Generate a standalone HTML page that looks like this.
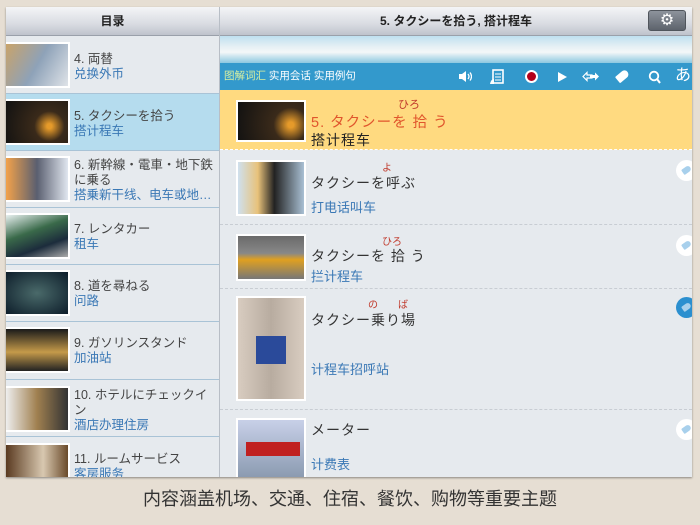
<!DOCTYPE html>
<html><head><meta charset="utf-8"><style>
*{margin:0;padding:0;box-sizing:border-box}
body{width:700px;height:525px;overflow:hidden;background:#e6ded3;font-family:"Liberation Sans","Noto Sans CJK JP",sans-serif;position:relative}
.abs{position:absolute}
#frame{left:6px;top:7px;width:686px;height:470px;background:#e6eaee;overflow:hidden;box-shadow:0 1px 2px rgba(0,0,0,.4)}
.hdr{top:0;height:29px;background:linear-gradient(#f4f5f7,#d9dce2 60%,#bfc3cc);border-bottom:1px solid #9aa0aa;font-size:12px;font-weight:bold;color:#222;text-align:center;line-height:28px}
.row{left:0;width:213px;border-bottom:1px solid #a9c3d6;background:#e6eaee}
.row .th{position:absolute;left:0;width:64px;height:46px;border:2px solid #fff;border-left:0}
.row .t{position:absolute;left:68px;font-size:12.5px;color:#444;line-height:15px;width:142px}
.row .c{color:#3a78b5}
.r2{left:214px;width:472px;border-bottom:1px dashed #c8cdd3}
.r2 .th{position:absolute;left:16px;border:2px solid #fff}
.jp{position:absolute;left:91px;font-size:14px;color:#333;letter-spacing:1px}
.cn{position:absolute;left:91px;font-size:13px;color:#3a78b5}
.rb{position:absolute;font-size:10px;color:#c0392b}
.tag{position:absolute;left:456px;width:21px;height:21px;border-radius:50%;background:#fff}
.tag:after{content:"";position:absolute;left:6px;top:7px;width:9px;height:6px;background:#a8d0ec;border-radius:1px 3px 3px 1px;transform:rotate(-35deg)}
</style></head><body>
<div id="frame" class="abs">
 <div class="abs hdr" style="left:0;width:213px">目录</div>
 <div class="abs" style="left:213px;top:0;width:1px;height:470px;background:#b8bec6"></div>
 <div class="abs hdr" style="left:214px;width:472px">5. タクシーを拾う, 搭计程车</div>
 <div class="abs" style="left:642px;top:3px;width:38px;height:21px;border-radius:3px;background:linear-gradient(#8d939c,#5d636c);border:1px solid #50555c;color:#fff;font-size:16px;text-align:center;line-height:19px">⚙</div>

 <div class="abs row" style="top:29px;height:58px"><div class="th" style="top:6px;background:linear-gradient(120deg,#c9a36a,#8ea2b8,#dfe3e8)"></div><div class="t" style="top:16px">4. 両替<br><span class="c">兑换外币</span></div></div>
 <div class="abs row" style="top:87px;height:57px;background:#b5dcee"><div class="th" style="top:5px;background:radial-gradient(circle at 70% 60%,#e59a2a 5%,#3a2a1a 30%,#111)"></div><div class="t" style="top:15px">5. タクシーを拾う<br><span class="c">搭计程车</span></div></div>
 <div class="abs row" style="top:144px;height:57px"><div class="th" style="top:5px;background:linear-gradient(90deg,#f3a24a,#5a5f70 50%,#e0e6ef)"></div><div class="t" style="top:7px">6. 新幹線・電車・地下鉄に乗る<br><span class="c">搭乗新干线、电车或地…</span></div></div>
 <div class="abs row" style="top:201px;height:57px"><div class="th" style="top:5px;background:linear-gradient(160deg,#e8f0f0,#3a6a4a 40%,#1c2c3c 70%,#aaa)"></div><div class="t" style="top:14px">7. レンタカー<br><span class="c">租车</span></div></div>
 <div class="abs row" style="top:258px;height:57px"><div class="th" style="top:5px;background:radial-gradient(#4a6a6a,#0d1d2a)"></div><div class="t" style="top:14px">8. 道を尋ねる<br><span class="c">问路</span></div></div>
 <div class="abs row" style="top:315px;height:58px"><div class="th" style="top:5px;background:linear-gradient(#1a1a1a,#c59a4a 55%,#222)"></div><div class="t" style="top:14px">9. ガソリンスタンド<br><span class="c">加油站</span></div></div>
 <div class="abs row" style="top:373px;height:57px"><div class="th" style="top:6px;background:linear-gradient(90deg,#eee,#a08050 50%,#333)"></div><div class="t" style="top:8px">10. ホテルにチェックイン<br><span class="c">酒店办理住房</span></div></div>
 <div class="abs row" style="top:430px;height:45px"><div class="th" style="top:6px;background:linear-gradient(90deg,#5a3a20,#d8c8b0 60%,#6a4a2a)"></div><div class="t" style="top:15px">11. ルームサービス<br><span class="c">客房服务</span></div></div>

 <div class="abs" style="left:214px;top:29px;width:472px;height:27px;background:linear-gradient(#bfe0f0,#e6f0f4 40%,#f4f7f8 60%,#8cc8e0)"></div>
 <div class="abs" style="left:214px;top:56px;width:472px;height:27px;background:#3399cc;font-size:10.5px;color:#fff;line-height:27px;padding-left:4px"><span style="color:#d9f0a0">图解词汇</span> 实用会话 实用例句
  <svg class="abs" style="left:238px;top:7px" width="14" height="13" viewBox="0 0 14 13"><path d="M1 4h3l4-3v11l-4-3H1z" fill="#fff"/><path d="M10 4q2 2.5 0 5M12 2.5q3 4 0 8" stroke="#fff" stroke-width="1.3" fill="none"/></svg>
  <svg class="abs" style="left:270px;top:6px" width="14" height="16" viewBox="0 0 14 16"><rect x="3" y="1" width="10" height="13" fill="none" stroke="#fff" stroke-width="1.6"/><path d="M5 5h6M5 8h6M5 11h6" stroke="#fff"/><path d="M0 15q1-5 4-5v5z" fill="#fff"/></svg>
  <span class="abs" style="left:305px;top:7px;width:13px;height:13px;border-radius:50%;background:#b3001a;border:2px solid #fff"></span>
  <span class="abs" style="left:338px;top:9px;width:0;height:0;border-left:9px solid #fff;border-top:5px solid transparent;border-bottom:5px solid transparent"></span>
  <svg class="abs" style="left:362px;top:8px" width="18" height="11" viewBox="0 0 18 11"><path d="M1 5.5l4-4v2.5h5v3H5v2.5z" fill="none" stroke="#fff" stroke-width="1.2"/><path d="M17 5.5l-4-4v2.5H8v3h5v2.5z" fill="#fff"/></svg>
  <span class="abs" style="left:396px;top:9px;width:13px;height:8px;background:#fff;border-radius:1px 4px 4px 1px;transform:rotate(-40deg)"></span>
  <svg class="abs" style="left:428px;top:7px" width="13" height="14" viewBox="0 0 13 14"><circle cx="6" cy="6" r="4.3" fill="none" stroke="#fff" stroke-width="1.8"/><path d="M9 9l3 4" stroke="#fff" stroke-width="2"/></svg>
  <span class="abs" style="left:455px;top:-1px;font-size:16px">あ</span>
 </div>

 <div class="abs r2" style="top:83px;height:60px;background:#ffda80;border-bottom:1px dashed #fff">
  <div class="th" style="top:10px;width:70px;height:42px;background:radial-gradient(circle at 80% 60%,#e59a2a 5%,#3a2a1a 30%,#111)"></div>
  <div class="rb" style="left:178px;top:6px;font-size:11px">ひろ</div>
  <div class="jp" style="top:21px;color:#e0552c;font-size:14.5px">5. タクシーを 拾 う</div>
  <div class="jp" style="top:40px;color:#222">搭计程车</div>
 </div>
 <div class="abs r2" style="top:143px;height:75px">
  <div class="th" style="top:10px;width:70px;height:56px;background:linear-gradient(90deg,#cfe0ee,#e8c27a 30%,#222 55%,#a9c0d4)"></div>
  <div class="rb" style="left:162px;top:9px">よ</div>
  <div class="jp" style="top:23px">タクシーを呼ぶ</div>
  <div class="cn" style="top:47px">打电话叫车</div>
  <div class="tag" style="top:10px"></div>
 </div>
 <div class="abs r2" style="top:218px;height:64px">
  <div class="th" style="top:9px;width:70px;height:47px;background:linear-gradient(#6a6a6a,#888 40%,#e0a020 55%,#777)"></div>
  <div class="rb" style="left:162px;top:8px">ひろ</div>
  <div class="jp" style="top:21px">タクシーを 拾 う</div>
  <div class="cn" style="top:41px">拦计程车</div>
  <div class="tag" style="top:10px"></div>
 </div>
 <div class="abs r2" style="top:282px;height:121px">
  <div class="th" style="top:7px;width:70px;height:105px;background:linear-gradient(90deg,#d8ccc0,#b8aca0,#d8ccc0)"><div style="position:absolute;left:18px;top:38px;width:30px;height:28px;background:#2a4a9a"></div></div>
  <div class="rb" style="left:148px;top:7px">の</div><div class="rb" style="left:178px;top:7px">ば</div>
  <div class="jp" style="top:21px">タクシー乗り場</div>
  <div class="cn" style="top:70px">计程车招呼站</div>
  <div class="tag" style="top:8px;background:#2b8fcf"></div>
 </div>
 <div class="abs r2" style="top:403px;height:70px;border:0">
  <div class="th" style="top:8px;width:70px;height:62px;background:linear-gradient(#c8d0e8,#8a9ab0)"><div style="position:absolute;left:8px;top:22px;width:54px;height:14px;background:#c02020"></div></div>
  <div class="jp" style="top:10px">メーター</div>
  <div class="cn" style="top:44px">计费表</div>
  <div class="tag" style="top:9px"></div>
 </div>
</div>
<div class="abs" style="left:0;top:485px;width:700px;text-align:center;font-size:18px;color:#333">内容涵盖机场、交通、住宿、餐饮、购物等重要主题</div>
</body></html>
